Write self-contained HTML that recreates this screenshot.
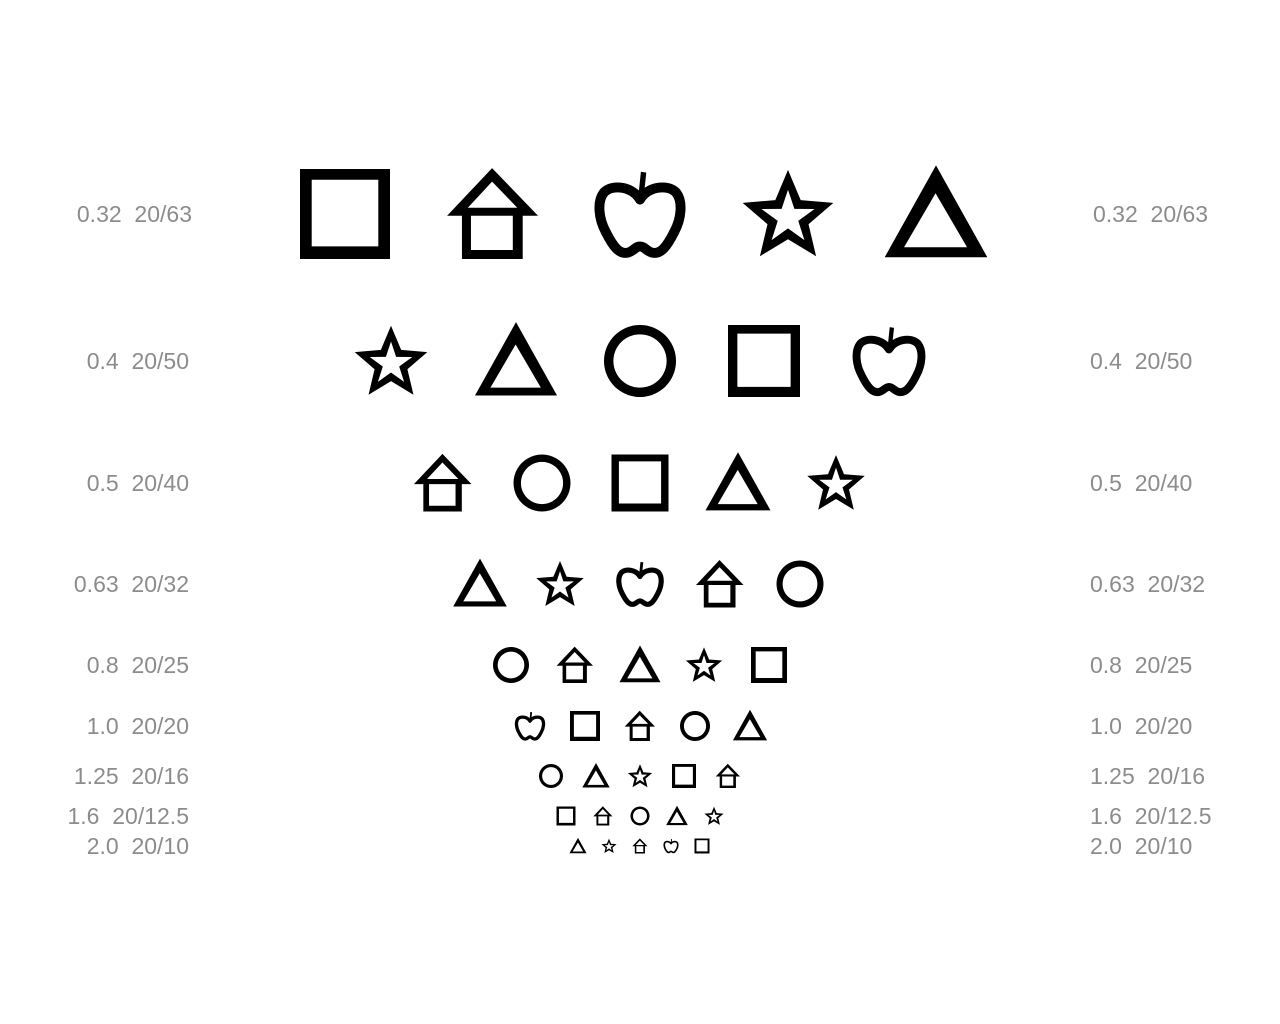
<!DOCTYPE html>
<html><head><meta charset="utf-8"><style>
html,body{margin:0;padding:0;background:#fff;width:1280px;height:1024px;overflow:hidden}
svg{display:block}
text{font-family:"Liberation Sans",sans-serif;font-size:23px;fill:#8c8c8c}
</style></head><body>
<svg width="1280" height="1024" viewBox="0 0 1280 1024" xmlns="http://www.w3.org/2000/svg">
<defs>
<symbol id="sq" viewBox="0 0 100 100" overflow="visible"><path fill-rule="evenodd" d="M0,0H100V100H0Z M13,12V86H87V12Z"/></symbol>
<symbol id="ho" viewBox="0 0 100 100" overflow="visible"><path fill-rule="evenodd" d="M49,-1L100,52H-1Z M49,14L77,43H22Z M15.5,52H83V100H15.5Z M25.5,52H72V90H25.5Z"/></symbol>
<symbol id="ap" viewBox="0 0 100 100" overflow="visible"><path fill="none" stroke="#000" stroke-width="11" stroke-linejoin="round" d="M50,34 C42,20 20,16 10,26 C2,36 4,55 12,70 C20,86 27,95 36,93 C42,92 45,86 50,86 C55,86 58,92 64,93 C73,95 80,86 88,70 C96,55 98,36 90,26 C80,16 58,20 50,34 Z"/><path d="M48,32L51,3L57,4L54,32Z"/></symbol>
<symbol id="st" viewBox="0 0 100 100" overflow="visible"><path fill-rule="evenodd" d="M50,1L64.1,34.6L100.4,37.6L72.8,61.4L81.2,96.9L50,78L18.8,96.9L27.2,61.4L-0.4,37.6L35.9,34.6Z M50,23L57.1,44.3L79.5,44.4L61.4,57.7L68.2,79L50,66L31.8,79L38.6,57.7L20.5,44.4L42.9,44.3Z"/></symbol>
<symbol id="tr" viewBox="0 0 100 100" overflow="visible"><path fill-rule="evenodd" d="M50,-4L107,98H-7Z M49.5,27L84.5,87H14.5Z"/></symbol>
<symbol id="ci" viewBox="0 0 100 100" overflow="visible"><path fill-rule="evenodd" d="M50,0A50,50 0 1 0 50.01,0Z M50,13A37,37 0 1 0 50.01,13Z"/></symbol>
</defs>
<use href="#sq" x="300" y="169" width="90" height="90"/>
<use href="#ho" x="448" y="169" width="90" height="90"/>
<use href="#ap" x="595" y="169" width="90" height="90"/>
<use href="#st" x="743" y="169" width="90" height="90"/>
<use href="#tr" x="891" y="169" width="90" height="90"/>
<use href="#st" x="355" y="325" width="72" height="72"/>
<use href="#tr" x="480" y="325" width="72" height="72"/>
<use href="#ci" x="604" y="325" width="72" height="72"/>
<use href="#sq" x="728" y="325" width="72" height="72"/>
<use href="#ap" x="853" y="325" width="72" height="72"/>
<use href="#ho" x="414.5" y="454.5" width="57" height="57"/>
<use href="#ci" x="513.5" y="454.5" width="57" height="57"/>
<use href="#sq" x="611.5" y="454.5" width="57" height="57"/>
<use href="#tr" x="709.5" y="454.5" width="57" height="57"/>
<use href="#st" x="807.5" y="454.5" width="57" height="57"/>
<use href="#tr" x="456.5" y="560.5" width="47" height="47"/>
<use href="#st" x="536.5" y="560.5" width="47" height="47"/>
<use href="#ap" x="616.5" y="560.5" width="47" height="47"/>
<use href="#ho" x="696.5" y="560.5" width="47" height="47"/>
<use href="#ci" x="776.5" y="560.5" width="47" height="47"/>
<use href="#ci" x="493" y="647" width="36" height="36"/>
<use href="#ho" x="557" y="647" width="36" height="36"/>
<use href="#tr" x="622" y="647" width="36" height="36"/>
<use href="#st" x="686" y="647" width="36" height="36"/>
<use href="#sq" x="751" y="647" width="36" height="36"/>
<use href="#ap" x="515" y="711" width="30" height="30"/>
<use href="#sq" x="570" y="711" width="30" height="30"/>
<use href="#ho" x="625" y="711" width="30" height="30"/>
<use href="#ci" x="680" y="711" width="30" height="30"/>
<use href="#tr" x="735" y="711" width="30" height="30"/>
<use href="#ci" x="539" y="764" width="24" height="24"/>
<use href="#tr" x="584" y="764" width="24" height="24"/>
<use href="#st" x="628" y="764" width="24" height="24"/>
<use href="#sq" x="672" y="764" width="24" height="24"/>
<use href="#ho" x="716" y="764" width="24" height="24"/>
<use href="#sq" x="556.5" y="806.5" width="19" height="19"/>
<use href="#ho" x="593.5" y="806.5" width="19" height="19"/>
<use href="#ci" x="630.5" y="806.5" width="19" height="19"/>
<use href="#tr" x="667.5" y="806.5" width="19" height="19"/>
<use href="#st" x="704.5" y="806.5" width="19" height="19"/>
<use href="#tr" x="570.5" y="838.5" width="15" height="15"/>
<use href="#st" x="601.5" y="838.5" width="15" height="15"/>
<use href="#ho" x="632.5" y="838.5" width="15" height="15"/>
<use href="#ap" x="663.5" y="838.5" width="15" height="15"/>
<use href="#sq" x="694.5" y="838.5" width="15" height="15"/>

<g text-anchor="end">
<text x="192" y="222" xml:space="preserve">0.32  20/63</text>
<text x="189" y="369" xml:space="preserve">0.4  20/50</text>
<text x="189" y="491" xml:space="preserve">0.5  20/40</text>
<text x="189" y="592" xml:space="preserve">0.63  20/32</text>
<text x="189" y="673" xml:space="preserve">0.8  20/25</text>
<text x="189" y="734" xml:space="preserve">1.0  20/20</text>
<text x="189" y="784" xml:space="preserve">1.25  20/16</text>
<text x="189" y="824" xml:space="preserve">1.6  20/12.5</text>
<text x="189" y="854" xml:space="preserve">2.0  20/10</text>
</g>
<g>
<text x="1093" y="222" xml:space="preserve">0.32  20/63</text>
<text x="1090" y="369" xml:space="preserve">0.4  20/50</text>
<text x="1090" y="491" xml:space="preserve">0.5  20/40</text>
<text x="1090" y="592" xml:space="preserve">0.63  20/32</text>
<text x="1090" y="673" xml:space="preserve">0.8  20/25</text>
<text x="1090" y="734" xml:space="preserve">1.0  20/20</text>
<text x="1090" y="784" xml:space="preserve">1.25  20/16</text>
<text x="1090" y="824" xml:space="preserve">1.6  20/12.5</text>
<text x="1090" y="854" xml:space="preserve">2.0  20/10</text>
</g>
</svg>
</body></html>
